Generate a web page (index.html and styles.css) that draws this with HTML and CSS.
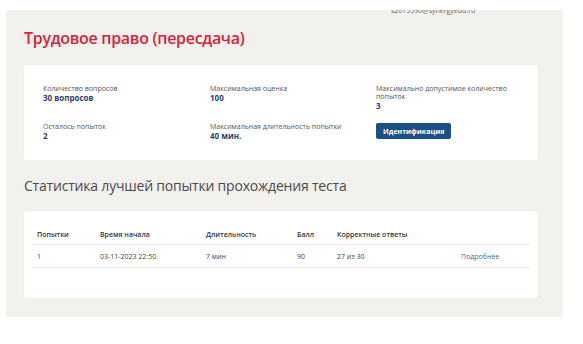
FILE: index.html
```html
<!DOCTYPE html>
<html lang="ru">
<head>
    <meta charset="UTF-8">
    <meta name="viewport" content="width=device-width, initial-scale=1.0">
    <title>Трудовое право (пересдача)</title>
    <link rel="stylesheet" href="styles.css">
</head>
<body>
    <div class="page">
        <div class="topline">
            <span class="user-email">s2075590@synergyedu.ru</span>
        </div>

        <h1 class="test-title">Трудовое право (пересдача)</h1>

        <div class="card info-card">
            <div class="info-item">
                <div class="info-label">Количество вопросов</div>
                <div class="info-value">30 вопросов</div>
            </div>
            <div class="info-item">
                <div class="info-label">Максимальная оценка</div>
                <div class="info-value">100</div>
            </div>
            <div class="info-item">
                <div class="info-label">Максимально допустимое количество попыток</div>
                <div class="info-value">3</div>
            </div>
            <div class="info-item">
                <div class="info-label">Осталось попыток</div>
                <div class="info-value">2</div>
            </div>
            <div class="info-item">
                <div class="info-label">Максимальная длительность попытки</div>
                <div class="info-value">40 мин.</div>
            </div>
            <div class="info-item">
                <button class="btn-ident">Идентификация</button>
            </div>
        </div>

        <h2 class="section-title">Статистика лучшей попытки прохождения теста</h2>

        <div class="card stats-card">
            <table class="stats-table">
                <thead>
                    <tr>
                        <th class="col-try">Попытки</th>
                        <th class="col-start">Время начала</th>
                        <th class="col-dur">Длительность</th>
                        <th class="col-score">Балл</th>
                        <th class="col-correct">Корректные ответы</th>
                        <th></th>
                    </tr>
                </thead>
                <tbody>
                    <tr>
                        <td>1</td>
                        <td>03-11-2023 22:50</td>
                        <td>7 мин</td>
                        <td>90</td>
                        <td>27 из 30</td>
                        <td><a href="#" class="more-link">Подробнее</a></td>
                    </tr>
                </tbody>
            </table>
        </div>
    </div>
</body>
</html>
```

FILE: styles.css
```css
body {
    margin: 0;
    padding: 0;
    background: #fff;
    font-family: 'Open Sans', sans-serif;
    color: #333;
}

.page {
    margin: 10px 20px 0 6px;
    padding: 0 25px 19px 18px;
    background: #f2f1ee;
    height: 288px;
}

.topline {
    height: 6px;
    overflow: hidden;
    position: relative;
}

.user-email {
    position: absolute;
    left: 367px;
    top: -4px;
    font-size: 7px;
    color: #666;
}

.test-title {
    margin: 10px 0 0;
    font-size: 16px;
    font-weight: 600;
    letter-spacing: -0.3px;
    line-height: 24px;
    color: #d8213b;
}

.card {
    background: #fff;
    border-radius: 3px;
    box-shadow: 0 0 2px rgba(0, 0, 0, 0.04);
}

.info-card {
    margin-top: 15px;
    height: 95px;
    box-sizing: border-box;
    padding: 20px 19px 0;
    display: grid;
    grid-template-columns: 167px 166px 140px;
    grid-auto-rows: 38px;
}

.info-label {
    font-size: 7px;
    line-height: 8px;
    color: #555;
}

.info-value {
    font-size: 8px;
    font-weight: 700;
    line-height: 9px;
    color: #2c3f69;
}

.btn-ident {
    display: block;
    margin-top: 0;
    padding: 0 7px;
    height: 16px;
    border: none;
    border-radius: 2px;
    background: #1d4f87;
    color: #fff;
    font-family: 'Open Sans', sans-serif;
    font-size: 7px;
    font-weight: 700;
    cursor: pointer;
}

.section-title {
    margin: 16px 0 0;
    font-size: 14px;
    font-weight: 400;
    letter-spacing: -0.2px;
    line-height: 20px;
    color: #4a4a4a;
}

.stats-card {
    margin-top: 15px;
    height: 87px;
    box-sizing: border-box;
    padding: 13px 8px 0;
}

.stats-table {
    width: 100%;
    border-collapse: collapse;
    font-size: 7px;
    color: #444;
}

.stats-table th,
.stats-table td {
    text-align: left;
    padding: 0 0 0 5px;
    height: 22px;
    border-bottom: 1px solid #e8e8e8;
}

.stats-table th {
    height: 20px;
    font-weight: 600;
    color: #333;
}

.col-try { width: 58px; }
.col-start { width: 101px; }
.col-dur { width: 86px; }
.col-score { width: 35px; }
.col-correct { width: 119px; }

.more-link {
    color: #3d6a9a;
    text-decoration: none;
}
```
